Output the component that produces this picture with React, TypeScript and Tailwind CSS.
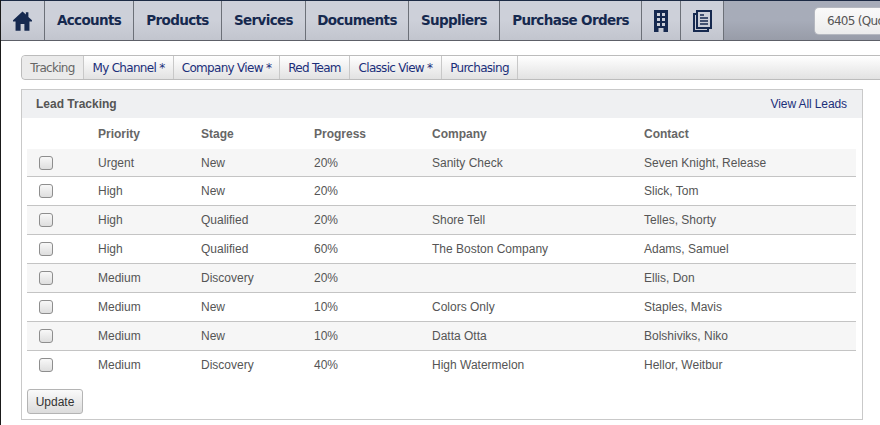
const NAV_ITEMS = [
  { label: 'Accounts', width: 'w-[89px]' },
  { label: 'Products', width: 'w-[88px]' },
  { label: 'Services', width: 'w-[84px]' },
  { label: 'Documents', width: 'w-[103px]' },
  { label: 'Suppliers', width: 'w-[91px]' },
  { label: 'Purchase Orders', width: 'w-[142px]' },
];

const TABS = [
  { label: 'Tracking', width: 'w-[62px]' },
  { label: 'My Channel *', width: 'w-[90px]' },
  { label: 'Company View *', width: 'w-[106px]' },
  { label: 'Red Team', width: 'w-[70px]' },
  { label: 'Classic View *', width: 'w-[92px]' },
  { label: 'Purchasing', width: 'w-[76px]' },
];

const LEADS = [
  ['Urgent', 'New', '20%', 'Sanity Check', 'Seven Knight, Release'],
  ['High', 'New', '20%', '', 'Slick, Tom'],
  ['High', 'Qualified', '20%', 'Shore Tell', 'Telles, Shorty'],
  ['High', 'Qualified', '60%', 'The Boston Company', 'Adams, Samuel'],
  ['Medium', 'Discovery', '20%', '', 'Ellis, Don'],
  ['Medium', 'New', '10%', 'Colors Only', 'Staples, Mavis'],
  ['Medium', 'New', '10%', 'Datta Otta', 'Bolshiviks, Niko'],
  ['Medium', 'Discovery', '40%', 'High Watermelon', 'Hellor, Weitbur'],
];

const COLUMNS = [
  { label: 'Priority', width: 'w-[103px]' },
  { label: 'Stage', width: 'w-[113px]' },
  { label: 'Progress', width: 'w-[118px]' },
  { label: 'Company', width: 'w-[212px]' },
  { label: 'Contact', width: '' },
];

function HomeIcon() {
  return (
    <svg width="19" height="20" viewBox="0 0 18 19" fill="#16294f">
      <path d="M9 0.5 L12.2 3.4 V1.2 H14.6 V5.6 L18 8.8 V10 H15.6 V18.8 H10.8 V12.4 H7.2 V18.8 H2.4 V10 H0 V8.8 Z" />
    </svg>
  );
}

function BuildingIcon() {
  return (
    <svg width="14" height="22" viewBox="0 0 14 22" fill="#16294f">
      <path
        fillRule="evenodd"
        d="M0 0 H14 V22 H9.5 V18 H4.5 V22 H0 Z M3 3 V6 H6 V3 Z M8 3 V6 H11 V3 Z M3 8 V11 H6 V8 Z M8 8 V11 H11 V8 Z M3 13 V16 H6 V13 Z M8 13 V16 H11 V13 Z"
      />
    </svg>
  );
}

function PagesIcon() {
  return (
    <svg width="19" height="22" viewBox="0 0 19 22" fill="none" stroke="#16294f" strokeWidth="2">
      <path d="M4 1 H18 V18 H4 Z" />
      <path d="M4 4 H1 V21 H15 V18" />
      <path d="M7 5 H11 M7 8 H15 M7 11 H15 M7 14 H15" strokeWidth="1.5" />
    </svg>
  );
}

function NavCell({ width, children }: { width: string; children: React.ReactNode }) {
  return (
    <div
      className={`${width} flex h-full shrink-0 items-center justify-center border-r border-[#6c7078] bg-gradient-to-b from-[#cdd0d9] via-[#cdd0d9] to-[#c2c5ce]`}
    >
      {children}
    </div>
  );
}

export default function App() {
  return (
    <div className="h-[425px] w-[880px] overflow-hidden border-l border-[#1a1a1a] bg-white font-['Liberation_Sans',sans-serif] text-xs text-[#555]">
      <nav className="flex h-[41px] border-y border-t-[#1c2a44] border-b-[#5d6068] bg-gradient-to-b from-[#a7acb9] via-[#a7acb9] to-[#989ca8]">
        <NavCell width="w-[44px]">
          <HomeIcon />
        </NavCell>
        {NAV_ITEMS.map((item) => (
          <NavCell key={item.label} width={item.width}>
            <span className="font-['DejaVu_Sans',sans-serif] text-[13.5px] font-bold tracking-[-0.65px] text-[#16294f]">
              {item.label}
            </span>
          </NavCell>
        ))}
        <NavCell width="w-[39px]">
          <BuildingIcon />
        </NavCell>
        <NavCell width="w-[43px]">
          <PagesIcon />
        </NavCell>
        <div className="ml-[90px] mt-[6px] h-[28px] w-[80px] shrink-0 overflow-hidden whitespace-nowrap rounded-l-[5px] border border-r-0 border-[#b5b8c0] bg-gradient-to-b from-[#fafafa] to-[#ececec] pl-[12px] font-['DejaVu_Sans',sans-serif] text-xs leading-[26px] tracking-[-0.7px] text-[#555]">
          6405 (Quote)
        </div>
      </nav>

      <div className="pl-[20px] pt-[14px]">
        <div className="flex h-[25px] w-[880px] rounded-l-[4px] border border-[#bcbcbc] bg-gradient-to-b from-white to-[#e2e2e2] font-['DejaVu_Sans',sans-serif] text-xs tracking-[-0.7px] text-[#1b2f7a]">
          {TABS.map((tab, i) => (
            <div
              key={tab.label}
              className={`${tab.width} ${i === 0 ? 'rounded-l-[4px] bg-[#ebebeb] text-[#666]' : ''} flex shrink-0 items-center justify-center border-r border-[#c8c8c8]`}
            >
              {tab.label}
            </div>
          ))}
        </div>

        <section className="mt-[9px] h-[331px] w-[842px] border border-[#c9c9c9]">
          <header className="flex h-[28px] items-center justify-between bg-[#eff0f2] pl-[14px] pr-[15px]">
            <h2 className="text-xs font-bold text-[#555]">Lead Tracking</h2>
            <a className="text-xs tracking-[-0.1px] text-[#1b2f7a]">View All Leads</a>
          </header>

          <div className="px-[5px]">
            <table className="w-[829px] table-fixed border-collapse">
              <thead>
                <tr className="h-[31px]">
                  <th className="w-[71px]" />
                  {COLUMNS.map((col) => (
                    <th key={col.label} className={`${col.width} text-left font-bold text-[#666]`}>
                      {col.label}
                    </th>
                  ))}
                </tr>
              </thead>
              <tbody>
                {LEADS.map((lead, i) => (
                  <tr
                    key={i}
                    className={`${i === 0 ? 'h-[27px]' : 'h-[29px]'} ${i % 2 === 0 ? 'bg-[#f6f6f6]' : ''} ${i < LEADS.length - 1 ? 'border-b border-[#c4c4c4]' : ''}`}
                  >
                    <td className={`pl-[12px] ${i === 0 ? 'pt-[2px]' : ''}`}>
                      <div className="h-[14px] w-[14px] rounded-[3px] border border-[#8e8e8e] bg-gradient-to-b from-[#f8f8f8] to-[#dedede]" />
                    </td>
                    {lead.map((value, j) => (
                      <td key={j} className={i === 0 ? 'pt-[2px]' : ''}>
                        {value}
                      </td>
                    ))}
                  </tr>
                ))}
              </tbody>
            </table>

            <button
              type="button"
              className="mt-[10px] h-[25px] w-[56px] rounded-[3px] border border-[#b4b4b4] bg-gradient-to-b from-[#fafafa] to-[#dcdcdc] text-xs text-[#333]"
            >
              Update
            </button>
          </div>
        </section>
      </div>
    </div>
  );
}
